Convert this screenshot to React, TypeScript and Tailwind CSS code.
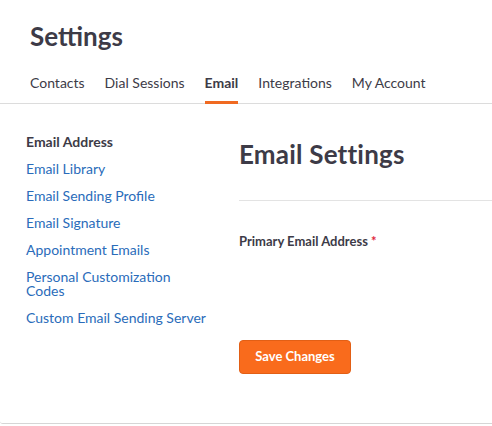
export default function App() {
  const tabs = ["Contacts", "Dial Sessions", "Email", "Integrations", "My Account"];
  const links = [
    "Email Library",
    "Email Sending Profile",
    "Email Signature",
    "Appointment Emails",
    "Personal Customization Codes",
    "Custom Email Sending Server",
  ];

  return (
    <div className="w-[492px] h-[426px] bg-white font-['Lato',sans-serif] text-[#3d3b47]">
      <div className="h-[424px] border-b border-[#d6d6d6] rounded-bl-[3px]">
        {/* header */}
        <div className="border-b border-[#dcdcdc] pl-[30px] pt-[20px]">
          <h1 className="text-[26px] leading-[32px] font-bold">Settings</h1>
          <nav className="flex gap-[20px] mt-[21px] -mb-px">
            {tabs.map((t) => (
              <div
                key={t}
                className={
                  t === "Email"
                    ? "text-[14px] leading-[20px] pb-[8px] border-b-[3px] border-[#f06a21] font-bold"
                    : "text-[14px] leading-[20px] pb-[8px] border-b-[3px] border-transparent"
                }
              >
                {t}
              </div>
            ))}
          </nav>
        </div>

        <div className="flex">
          {/* side menu */}
          <div className="w-[239px] shrink-0 pl-[26px] pr-[32px] pt-[31px] flex flex-col gap-[13px] text-[14px] leading-[14px]">
            <div className="font-bold">Email Address</div>
            {links.map((l) => (
              <a key={l} className="text-[#2a6cba] cursor-pointer">
                {l}
              </a>
            ))}
          </div>

          {/* content */}
          <div className="flex-1 pt-[34px]">
            <h2 className="text-[26px] leading-[32px] font-bold tracking-[0.2px]">Email Settings</h2>
            <div className="mt-[30px] border-t border-[#e3e3e3]" />
            <div className="mt-[32px] text-[13px] leading-[16px] font-bold">
              Primary Email Address <span className="text-[#e0263a]">*</span>
            </div>
            <button className="mt-[91px] w-[112px] h-[34px] rounded-[4px] bg-[#f96b1c] border border-[#e25f15] text-white text-[13px] font-bold">
              Save Changes
            </button>
          </div>
        </div>
      </div>
    </div>
  );
}
